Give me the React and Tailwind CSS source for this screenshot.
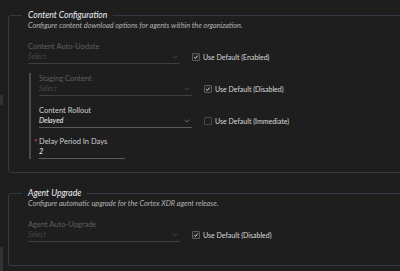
import React from "react";

const font = "font-['Lato',_'Liberation_Sans',_sans-serif]";

function Chevron({ dim }) {
  return (
    <svg width="6" height="4" viewBox="0 0 6 4" className="mr-[2px]">
      <polyline points="0.7,0.8 3,3 5.3,0.8" fill="none"
                stroke={dim ? "#4a4a4a" : "#777"} strokeWidth="0.9" />
    </svg>
  );
}

function Check({ checked, label }) {
  return (
    <div className="flex items-center gap-[3px] h-[10px]">
      <span className={`w-[8px] h-[8px] rounded-[1px] border flex items-center justify-center ${
        checked ? "border-[#5c5c5c] bg-[#262626]" : "border-[#474747] bg-[#1e1e1e]"}`}>
        {checked && (
          <svg width="6" height="6" viewBox="0 0 6 6">
            <path d="M1.3 3.3 L2.4 4.4 L4.7 1.6" fill="none" stroke="#f2f2f2" strokeWidth="0.9" />
          </svg>
        )}
      </span>
      <span className="text-[7px] leading-[10px] text-[#dcdcdc] whitespace-nowrap">{label}</span>
    </div>
  );
}

function Field({ label, value, w, disabled, select = true, required }) {
  return (
    <div className={w}>
      <div className={`flex items-center text-[7.5px] leading-[10px] whitespace-nowrap ${disabled ? "text-[#5e5e5e]" : "text-[#cfcfcf]"}`}>
        {required && <span className="-ml-[5px] w-[5px] text-[8px] font-bold text-[#e0403d]">*</span>}
        {label}
      </div>
      <div className={`flex items-center justify-between leading-[10px] pb-[1px] border-b ${
        disabled ? "border-[#3f3f3f]" : "border-[#5a5a5a]"}`}>
        <span className={`text-[7.2px] italic ${disabled ? "text-[#474747]" : "text-[#f4f4f4]"}`}>{value}</span>
        {select && <Chevron dim={disabled} />}
      </div>
    </div>
  );
}

function Row({ children, box }) {
  return (
    <div className="flex items-start gap-[12px]">
      {children}
      <div className="mt-[10px]">{box}</div>
    </div>
  );
}

function Section({ title, desc, children, className }) {
  return (
    <fieldset className={`w-[420px] rounded-[3px] border border-[#313945] pl-[13px] ${className}`}>
      <legend className="px-[6px] text-[8.6px] leading-[12px] italic text-[#eef2f8]">{title}</legend>
      <div className="pl-[6px]">
        <div className="text-[7.3px] leading-[10px] italic text-[#b4b4b4]">{desc}</div>
        <div className="mt-[11px]">{children}</div>
      </div>
    </fieldset>
  );
}

export default function App() {
  return (
    <div className={`h-[271px] w-[400px] overflow-hidden bg-[#1e1e1e] flex ${font}`}>
      {/* sliver of the side panel */}
      <div className="w-[3px] shrink-0 flex flex-col">
        <div className="h-[95px]" />
        <div className="h-[10px] bg-[#333333]" />
        <div className="h-[142px]" />
        <div className="flex-1 bg-[#333333]" />
      </div>

      <div className="flex-1 pl-[5px]">
        <Section title="Content Configuration" className="mt-[9px] pb-[13px]"
                 desc="Configure content download options for agents within the organization.">
          <Row box={<Check checked label="Use Default (Enabled)" />}>
            <Field label="Content Auto-Update" value="Select" w="w-[152px]" disabled />
          </Row>

          <div className="mt-[9px] ml-[1px] border-l-2 border-[#4a4a4a] pl-[8px] pt-[1px] flex flex-col gap-[9.5px]">
            <Row box={<Check checked label="Use Default (Disabled)" />}>
              <Field label="Staging Content" value="Select" w="w-[153px]" disabled />
            </Row>
            <Row box={<Check label="Use Default (Immediate)" />}>
              <Field label="Content Rollout" value="Delayed" w="w-[153px]" />
            </Row>
            <Field label="Delay Period In Days" value="2" w="w-[86px]" select={false} required />
          </div>
        </Section>

        <Section title="Agent Upgrade" className="mt-[14px] pb-[23px]"
                 desc="Configure automatic upgrade for the Cortex XDR agent release.">
          <Row box={<Check checked label="Use Default (Disabled)" />}>
            <Field label="Agent Auto-Upgrade" value="Select" w="w-[152px]" disabled />
          </Row>
        </Section>
      </div>
    </div>
  );
}
